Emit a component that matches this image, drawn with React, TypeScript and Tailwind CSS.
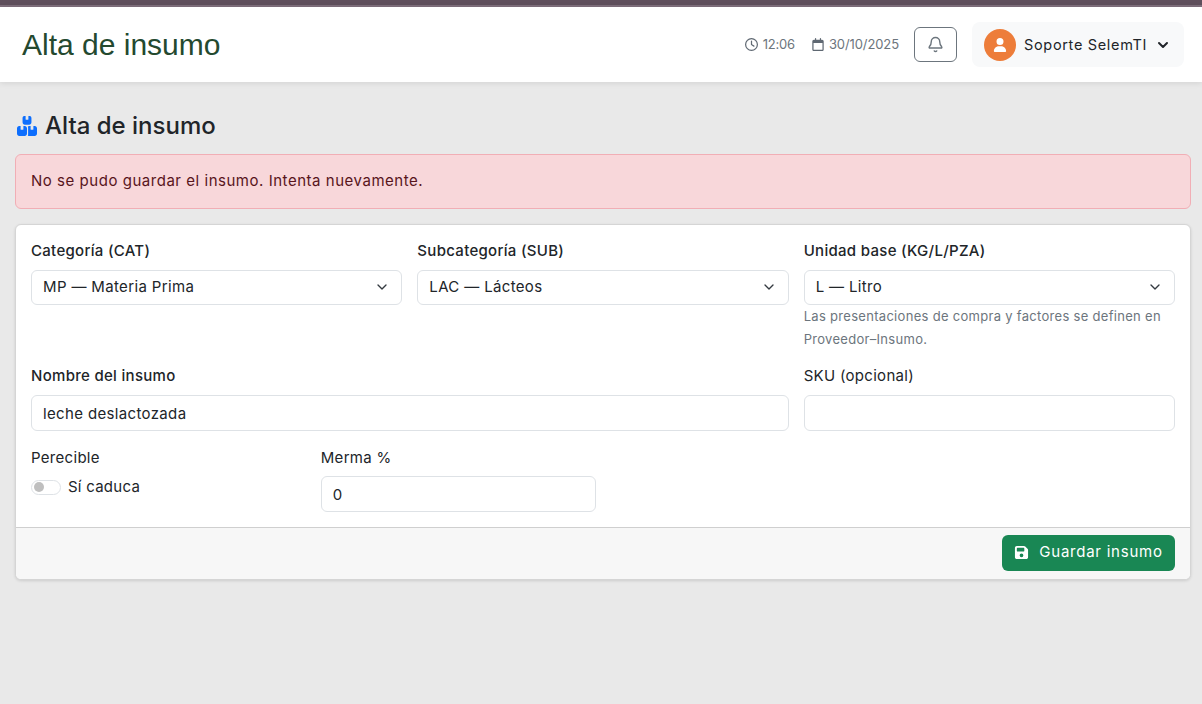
import { Bell, ChevronDown } from 'lucide-react';
import { FaBoxesStacked, FaRegClock, FaRegCalendar, FaUser, FaFloppyDisk } from 'react-icons/fa6';

const fieldBase =
  "w-full pl-[11px] pr-3 bg-white border border-[#dee2e6] rounded-md text-[15px] tracking-[0.35px] text-[#212529] outline-none";

const labelClass = "block h-[24px] text-[15px] leading-[24px] text-[#212529]";
const strongLabelClass = labelClass + " font-medium tracking-[0.3px]";
const plainLabelClass = labelClass + " tracking-[0.3px]";

function SelectField({ label, value }: { label: string; value: string }) {
  return (
    <div>
      <label className={strongLabelClass + " mb-[7px]"}>{label}</label>
      <div className="relative">
        <select defaultValue={value} className={fieldBase + " appearance-none h-[35px]"}>
          <option>{value}</option>
        </select>
        <ChevronDown className="absolute right-[12px] top-[9px] w-4 h-4 text-[#343a40] pointer-events-none" />
      </div>
    </div>
  );
}

export default function App() {
  return (
    <div className="min-h-[704px] bg-[#e9e9e9] font-['Inter','Liberation_Sans',sans-serif]">
      <div className="h-[5px] bg-[#5f4f5c]" />
      <div className="h-[2px] bg-[#7f6f7c]" />

      {/* Header */}
      <header className="h-[75px] bg-white flex items-center justify-between pl-[22px] pr-[18px] shadow-[0_1px_6px_rgba(0,0,0,0.1)]">
        <h1 className="font-['Liberation_Sans',sans-serif] text-[30px] text-[#24492f] leading-none">Alta de insumo</h1>
        <div className="flex items-center">
          <div className="flex items-center gap-[5px] text-[13px] tracking-[-0.2px] text-[#6c757d]">
            <FaRegClock className="w-[13px] h-[13px] text-[#5f6872]" />
            <span>12:06</span>
          </div>
          <div className="flex items-center gap-[5px] ml-[17px] text-[13px] tracking-[-0.1px] text-[#6c757d]">
            <FaRegCalendar className="w-[12px] h-[13px] text-[#5f6872]" />
            <span>30/10/2025</span>
          </div>
          <button className="ml-[15px] w-[43px] h-[35px] flex items-center justify-center border border-[#6c757d] rounded-md text-[#6c757d]">
            <Bell className="w-[17px] h-[17px]" />
          </button>
          <div className="ml-[15px] w-[212px] h-[45px] bg-[#f8f9fa] rounded-lg flex items-center pl-[12px]">
            <div className="w-[32px] h-[32px] rounded-full bg-[#ed7d3a] flex items-center justify-center">
              <FaUser className="w-[14px] h-[14px] text-white" />
            </div>
            <span className="ml-2 text-[14.5px] text-[#212529] tracking-[0.67px]">Soporte SelemTI</span>
            <ChevronDown className="ml-[8px] w-4 h-4 text-[#212529]" strokeWidth={3} />
          </div>
        </div>
      </header>

      <main className="pl-[15px] pr-[11px]">
        <div className="flex items-center gap-2 mt-[29px] h-[30px]">
          <FaBoxesStacked className="w-[20px] h-[20px] text-[#0d6efd] ml-[2px]" preserveAspectRatio="none" />
          <h2 className="text-[24px] font-medium text-[#212529]">Alta de insumo</h2>
        </div>

        <div className="mt-[13px] h-[55px] flex items-center px-[15px] bg-[#f8d7da] border border-[#f1aeb5] rounded-md text-[15px] tracking-[0.53px] text-[#58151c]">
          No se pudo guardar el insumo. Intenta nuevamente.
        </div>

        <div className="mt-[15px] bg-white border border-[#d5d5d5] rounded-md shadow-[0_1px_3px_rgba(0,0,0,0.12)] overflow-hidden">
          <div className="px-[15px] pt-[14px] pb-[15px] grid grid-cols-12 gap-x-[15px]">
            <div className="col-span-4">
              <SelectField label="Categoría (CAT)" value="MP — Materia Prima" />
            </div>
            <div className="col-span-4">
              <SelectField label="Subcategoría (SUB)" value="LAC — Lácteos" />
            </div>
            <div className="col-span-4">
              <SelectField label="Unidad base (KG/L/PZA)" value="L — Litro" />
              <p className="text-[13px] leading-[23px] tracking-[0.3px] text-[#6c757d]">
                Las presentaciones de compra y factores se definen en Proveedor–Insumo.
              </p>
            </div>

            <div className="col-span-8 mt-[13px]">
              <label className={strongLabelClass + " mb-[7px]"}>Nombre del insumo</label>
              <input defaultValue="leche deslactozada" className={fieldBase + " h-[36px]"} />
            </div>
            <div className="col-span-4 mt-[13px]">
              <label className={plainLabelClass + " mb-[7px]"}>SKU (opcional)</label>
              <input className={fieldBase + " h-[36px]"} />
            </div>

            <div className="col-span-3 mt-[15px]">
              <label className={plainLabelClass + " mb-[7px]"}>Perecible</label>
              <div className="flex items-center gap-[7px] h-[20px]">
                <span className="w-[30px] h-[15px] rounded-full border border-[#dee2e6] bg-white flex items-center pl-[2px]">
                  <span className="w-[10px] h-[10px] rounded-full bg-[#bfbfbf]" />
                </span>
                <span className="text-[15px] tracking-[0.25px] text-[#212529]">Sí caduca</span>
              </div>
            </div>
            <div className="col-span-3 mt-[15px]">
              <label className={plainLabelClass + " mb-[6px]"}>Merma %</label>
              <input defaultValue="0" className={fieldBase + " h-[36px]"} />
            </div>
          </div>

          <div className="h-[52px] pb-[2px] bg-[#f7f7f7] border-t border-[#cfcfcf] flex items-center justify-end px-[15px]">
            <button className="w-[173px] h-[36px] bg-[#198754] rounded-md flex items-center justify-center gap-[10px] text-[15px] tracking-[0.75px] text-white">
              <FaFloppyDisk className="w-[15px] h-[15px]" />
              Guardar insumo
            </button>
          </div>
        </div>
      </main>
    </div>
  );
}
